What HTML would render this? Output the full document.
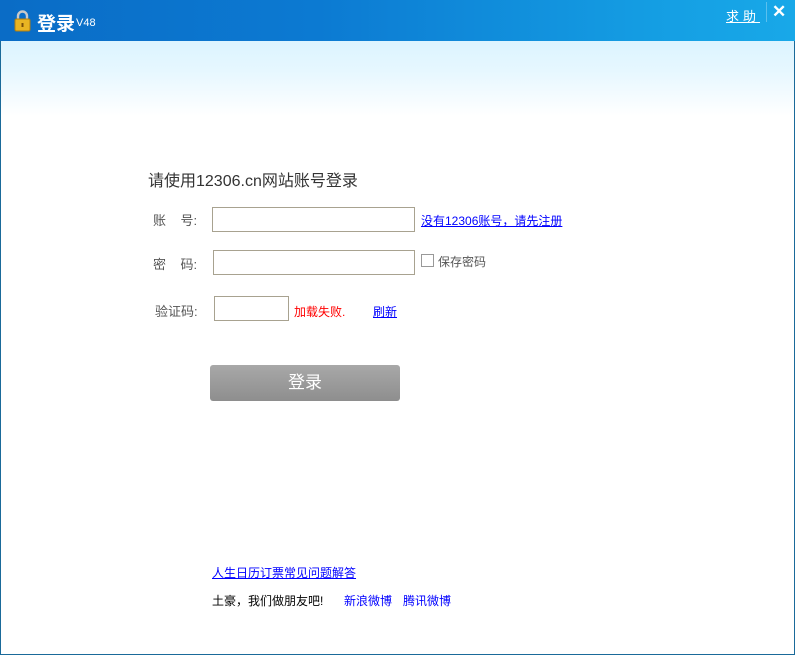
<!DOCTYPE html>
<html><head><meta charset="utf-8"><style>
*{margin:0;padding:0;box-sizing:border-box}
body{width:795px;height:655px;overflow:hidden;background:#fff;font-family:"Liberation Sans","Noto Sans CJK SC","WenQuanYi Zen Hei",sans-serif;position:relative}
.win{position:absolute;left:0;top:0;width:795px;height:655px;border:1px solid #1a6a9a;border-top:none}
.bar{position:absolute;left:0;top:0;width:795px;height:41px;background:linear-gradient(90deg,#0a6cc6 0%,#0c7ad2 40%,#15a0e4 85%,#18a8e8 100%)}
.glow{position:absolute;left:1px;top:41px;width:793px;height:75px;background:linear-gradient(#dcf4ff,#e6f7ff 40%,#fff)}
.t{position:absolute;color:#fff}
.a{position:absolute;font-size:12px;color:#00f;text-decoration:underline;white-space:nowrap}
.l{position:absolute;font-size:13px;color:#555;white-space:nowrap}
.in{position:absolute;border:1px solid #a8a290;background:#fff}
</style></head><body>
<div class="win"></div>
<div class="bar"></div>
<div class="glow"></div>
<svg style="position:absolute;left:14px;top:10px" width="17" height="22" viewBox="0 0 17 22">
<path d="M4 10V6a4.5 4.5 0 0 1 9 0v4" fill="none" stroke="#c9c9c9" stroke-width="2.4"/>
<rect x="1" y="9" width="15" height="12" rx="1.5" fill="#e8b523" stroke="#b07d10"/>
<rect x="7.5" y="13" width="2" height="4" fill="#7a5008"/>
</svg>
<div class="t" style="left:37px;top:9px;font-size:19px;font-weight:bold">登录</div>
<div class="t" style="left:76px;top:17px;font-size:11px">V48</div>
<div class="t" style="left:726px;top:6px;font-size:13px;text-decoration:underline;letter-spacing:4px">求助</div>
<div style="position:absolute;left:766px;top:2px;width:1px;height:20px;background:#5ac0ee"></div>
<div class="t" style="left:772px;top:2px;font-size:17px;font-weight:bold">✕</div>

<div style="position:absolute;left:148px;top:167px;font-size:16px;color:#333">请使用12306.cn网站账号登录</div>

<div class="l" style="left:153px;top:210px">账&nbsp;&nbsp;&nbsp;&nbsp;号:</div>
<div class="in" style="left:212px;top:207px;width:203px;height:25px"></div>
<div class="a" style="left:421px;top:212px">没有12306账号，请先注册</div>

<div class="l" style="left:153px;top:254px">密&nbsp;&nbsp;&nbsp;&nbsp;码:</div>
<div class="in" style="left:213px;top:250px;width:202px;height:25px"></div>
<div style="position:absolute;left:421px;top:254px;width:13px;height:13px;border:1px solid #999"></div>
<div class="l" style="left:438px;top:253px;font-size:12px">保存密码</div>

<div class="l" style="left:155px;top:301px">验证码:</div>
<div class="in" style="left:214px;top:296px;width:75px;height:25px"></div>
<div style="position:absolute;left:294px;top:303px;font-size:12px;color:#f00">加载失败.</div>
<div class="a" style="left:373px;top:303px">刷新</div>

<div style="position:absolute;left:210px;top:365px;width:190px;height:36px;border-radius:3px;background:linear-gradient(#a8a8a8,#8e8e8e);color:#fff;font-size:17px;text-align:center;line-height:36px">登录</div>

<div class="a" style="left:212px;top:564px;font-size:12px">人生日历订票常见问题解答</div>
<div style="position:absolute;left:212px;top:592px;font-size:12px;color:#000">土豪，我们做朋友吧!</div>
<div class="a" style="left:344px;top:592px;text-decoration:none">新浪微博</div>
<div class="a" style="left:403px;top:592px;text-decoration:none">腾讯微博</div>
</body></html>
